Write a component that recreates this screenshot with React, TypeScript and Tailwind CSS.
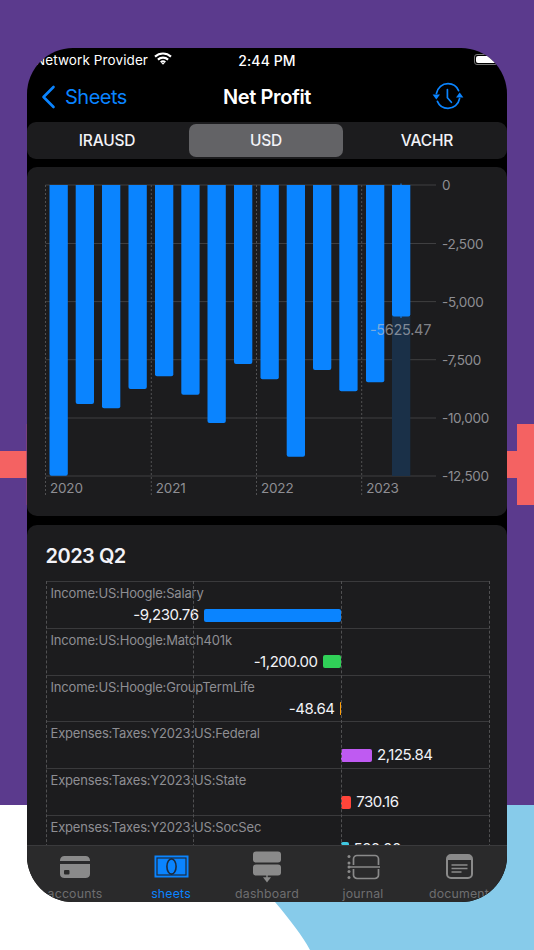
import React from "react";

const tops = [49.5, 75.7, 102, 128.5, 155, 181.3, 207.5, 234, 260.5, 286.7, 313, 339.3, 366, 392];
const bottoms = [475.7, 404, 408.3, 389, 376.3, 394.7, 423, 364, 379.3, 456.7, 370, 391.3, 382.3, 316.5];
const OX = 27;
const OY = 167;

function barPath(x: number, bottom: number) {
  const l = x - OX;
  const b = bottom - OY;
  const t = 185 - OY;
  const w = 18.3;
  return `M${l} ${t}H${l + w}V${b - 2}Q${l + w} ${b} ${l + w - 2} ${b}H${l + 2}Q${l} ${b} ${l} ${b - 2}Z`;
}

function Chart() {
  const hLines = [185, 243.5, 301.6, 359.7, 418, 476];
  const labels = ["0", "-2,500", "-5,000", "-7,500", "-10,000", "-12,500"];
  const vLines = [45.5, 151.3, 256.5, 361.7];
  const years = ["2020", "2021", "2022", "2023"];
  return (
    <svg width="480" height="349" viewBox="0 0 480 349" className="block" style={{ fontFamily: "Inter, sans-serif" }}>
      {hLines.map((y) => (
        <line key={y} x1={45.5 - OX} x2={436 - OX} y1={y - OY} y2={y - OY} stroke="#3f3f41" strokeWidth="1" />
      ))}
      {vLines.map((x) => (
        <line key={x} x1={x - OX} x2={x - OX} y1={185 - OY} y2={495 - OY} stroke="#505052" strokeWidth="1" strokeDasharray="2 2" />
      ))}
      <rect x={392 - OX} y={316 - OY} width="18.3" height="160" fill="#1a3048" />
      {tops.map((x, i) => (
        <path key={x} d={barPath(x, bottoms[i])} fill="#0a84ff" />
      ))}
      <line x1={401 - OX} x2={401 - OX} y1={183.5 - OY} y2={318 - OY} stroke="#0a84ff" strokeWidth="1" />
      {hLines.map((y, i) => (
        <text key={y} x={442 - OX} y={y - OY + 5} fontSize="13.5" letterSpacing="-0.3" fill="#8e8e93">
          {labels[i]}
        </text>
      ))}
      {vLines.map((x, i) => (
        <text key={x} x={x - OX + 4.5} y={493 - OY} fontSize="13.5" letterSpacing="-0.2" fill="#8e8e93">
          {years[i]}
        </text>
      ))}
      <text x={400.5 - OX} y={335 - OY} fontSize="14.5" letterSpacing="-0.3" textAnchor="middle" fill="#c4c6cc" fillOpacity="0.62">
        -5625.47
      </text>
    </svg>
  );
}

function Row({
  label,
  value,
  width,
  color,
  negative,
}: {
  label: string;
  value: string;
  width: number;
  color: string;
  negative?: boolean;
}) {
  const bar = <div className="h-[13px] rounded-[2px] shrink-0" style={{ width, backgroundColor: color }} />;
  const text = <span className="text-[15px] leading-[18px] tracking-[-0.45px] text-[#f2f2f7] whitespace-nowrap">{value}</span>;
  return (
    <div className="h-[46.8px] border-t border-[#3a3a3c] pl-[5px] shrink-0">
      <div className="text-[13px] leading-[16px] tracking-[-0.17px] pt-[3px] text-[#8e8e93] whitespace-nowrap">{label}</div>
      <div className="flex h-[20px] mt-[4px] -ml-[5px] items-center">
        <div className="w-[295px] shrink-0 flex justify-end items-center gap-[5px]">{negative ? <>{text}{bar}</> : null}</div>
        <div className="flex items-center gap-[5px]">{negative ? null : <>{bar}{text}</>}</div>
      </div>
    </div>
  );
}

function Wifi() {
  return (
    <svg width="18" height="13" viewBox="0 0 18 13" fill="none" stroke="white" strokeWidth="2.1" strokeLinecap="butt">
      <path d="M1 4.6C5.6 .4 12.4 .4 17 4.6" />
      <path d="M3.9 7.6C6.8 5 11.2 5 14.1 7.6" />
      <path d="M6.7 10.2C8 9.1 10 9.1 11.3 10.2" />
      <path d="M9 12.8l-1.6-1.7c1-.6 2.2-.6 3.2 0z" fill="white" stroke="none" />
    </svg>
  );
}

function HistoryIcon() {
  return (
    <svg width="32" height="30" viewBox="0 0 32 30" fill="none" stroke="#0a84ff" strokeWidth="1.7" strokeLinecap="round">
      <path d="M4.4 12.5C5.6 6.5 10.2 2.6 16 2.6c5 0 8.8 2.8 10.6 7" />
      <path d="M27.6 17.5C26.4 23.5 21.8 27.4 16 27.4c-5 0-8.8-2.8-10.6-7" />
      <path d="M15.4 8.5v8.2l4 4.6" />
      <path d="M0.6 13.4h7.4L4.3 18.4z" fill="#0a84ff" stroke="none" />
      <path d="M24 16.6h7.4L27.7 11.6z" fill="#0a84ff" stroke="none" />
    </svg>
  );
}

function CardIcon() {
  return (
    <svg width="32" height="24" viewBox="0 0 32 24" fill="#8a8a8a">
      <path d="M1 5.5C1 2.8 2.8 1 5.5 1h21C29.2 1 31 2.8 31 5.5V6H1z" />
      <path d="M1 9h30v10c0 2.4-1.8 4-4.5 4h-21C2.8 23 1 21.4 1 19z" />
      <rect x="5" y="15" width="5.5" height="4.4" rx="1" fill="#2a2a2a" />
    </svg>
  );
}

function SheetsIcon() {
  return (
    <svg width="35" height="23" viewBox="0 0 35 23">
      <rect x="0.5" y="0.5" width="34" height="22" fill="#0a84ff" />
      <rect x="3" y="3" width="29" height="17" fill="none" stroke="#1c2b3f" strokeWidth="1.2" />
      <ellipse cx="17.5" cy="11.5" rx="4.6" ry="7.6" fill="none" stroke="#1c2b3f" strokeWidth="1.6" />
    </svg>
  );
}

function DashboardIcon() {
  return (
    <svg width="30" height="32" viewBox="0 0 30 32" fill="#8a8a8a">
      <rect x="1" y="0.5" width="28" height="11" rx="3" />
      <rect x="1" y="13.5" width="28" height="11" rx="3" />
      <rect x="14.3" y="24" width="1.4" height="3" />
      <path d="M11 26.2h8l-4 5.3z" />
    </svg>
  );
}

function JournalIcon() {
  return (
    <svg width="33" height="26" viewBox="0 0 33 26" fill="none" stroke="#8a8a8a" strokeWidth="1.7">
      <circle cx="2" cy="2.5" r="1.5" fill="#8a8a8a" stroke="none" />
      <circle cx="2" cy="9" r="1.5" fill="#8a8a8a" stroke="none" />
      <circle cx="2" cy="13" r="1.5" fill="#8a8a8a" stroke="none" />
      <circle cx="2" cy="17.5" r="1.5" fill="#8a8a8a" stroke="none" />
      <circle cx="2" cy="23.5" r="1.5" fill="#8a8a8a" stroke="none" />
      <path d="M6.5 11V5a3.5 3.5 0 0 1 3.5-3.5h18A3.5 3.5 0 0 1 31.5 5v6" />
      <path d="M6.5 15v6a3.5 3.5 0 0 0 3.5 3.5h18a3.5 3.5 0 0 0 3.5-3.5v-6" />
      <path d="M2 13h31" />
    </svg>
  );
}

function DocIcon() {
  return (
    <svg width="27" height="25" viewBox="0 0 27 25" fill="none">
      <rect x="1" y="1" width="25" height="23" rx="4" stroke="#8a8a8a" strokeWidth="2" />
      <path d="M1 5a4 4 0 0 1 4-4h17a4 4 0 0 1 4 4v1H1z" fill="#8a8a8a" />
      <path d="M5.5 11h16M5.5 14.5h16M5.5 18h10" stroke="#8a8a8a" strokeWidth="1.4" />
    </svg>
  );
}

const tabs = [
  { label: "accounts", icon: <CardIcon /> },
  { label: "sheets", icon: <SheetsIcon />, active: true },
  { label: "dashboard", icon: <DashboardIcon /> },
  { label: "journal", icon: <JournalIcon /> },
  { label: "document", icon: <DocIcon /> },
];

export default function App() {
  return (
    <div className="relative w-[534px] h-[950px] overflow-hidden bg-white pl-[27px] pt-[48px] font-['Inter',sans-serif]">
      <svg className="absolute inset-0" width="534" height="950" viewBox="0 0 534 950">
        <rect width="534" height="805" fill="#5b3a8d" />
        <path d="M534 805H480V880C480 880 280 895 275 902C290 920 302 935 310 950H534Z" fill="#87cbea" />
        <rect x="0" y="451" width="30" height="27" fill="#f46262" />
        <rect x="26.4" y="424" width="2" height="81" fill="#8a4578" />
        <path d="M500 451H517V424H534V505H517V478H500Z" fill="#f46262" />
      </svg>

      <div className="relative w-[480px] h-[854px] rounded-[46px] overflow-hidden bg-black flex flex-col text-white">
        <div className="h-[24px] shrink-0 relative flex items-center pl-[8px] text-[13.5px] tracking-[0.1px]">
          <span className="whitespace-nowrap">Network Provider</span>
          <span className="ml-[6px] -mt-[3px]">
            <Wifi />
          </span>
          <span className="absolute left-0 right-0 top-0 h-full flex items-center justify-center font-medium text-[14px]">2:44 PM</span>
          <div className="absolute left-[447px] top-[6px] w-[24px] h-[11px] rounded-[3px] border border-[#777] p-[1px]">
            <div className="w-full h-full bg-white rounded-[2px]" />
          </div>
        </div>

        <div className="h-[50px] shrink-0 relative flex items-center">
          <svg width="15" height="24" viewBox="0 0 15 24" className="ml-[14px]" fill="none" stroke="#0a84ff" strokeWidth="2.6" strokeLinecap="round" strokeLinejoin="round">
            <path d="M12.5 2L2.5 12l10 10" />
          </svg>
          <span className="ml-[9px] text-[20px] tracking-[-0.5px] text-[#0a84ff]">Sheets</span>
          <span className="absolute inset-0 flex items-center justify-center text-[20px] tracking-[-0.4px] font-semibold">Net Profit</span>
          <span className="absolute left-[405px] top-[9px]">
            <HistoryIcon />
          </span>
        </div>

        <div className="h-[37px] shrink-0 grid grid-cols-3 bg-[#1c1c1e] rounded-[9px] py-[2px] text-[15.5px] tracking-[-0.2px] font-medium text-[#f2f2f7]">
          <div className="flex items-center justify-center pt-[1px]">IRAUSD</div>
          <div className="flex items-center justify-center pt-[1px] bg-[#636366] rounded-[7px] ml-[2px] mr-[4px]">USD</div>
          <div className="flex items-center justify-center pt-[1px]">VACHR</div>
        </div>

        <div className="mt-[8px] h-[349px] shrink-0 bg-[#1c1c1e] rounded-[10px]">
          <Chart />
        </div>

        <div className="mt-[9px] flex-1 min-h-0 overflow-hidden bg-[#1c1c1e] rounded-t-[10px] px-[18.5px]">
          <div className="h-[56px] flex items-center text-[20px] tracking-[-0.5px] font-semibold text-[#f2f2f7] pt-[5px]">2023 Q2</div>
          <div className="relative flex flex-col">
            <Row label="Income:US:Hoogle:Salary" value="-9,230.76" width={137} color="#0a84ff" negative />
            <Row label="Income:US:Hoogle:Match401k" value="-1,200.00" width={18} color="#30d158" negative />
            <Row label="Income:US:Hoogle:GroupTermLife" value="-48.64" width={1} color="#ff9f0a" negative />
            <Row label="Expenses:Taxes:Y2023:US:Federal" value="2,125.84" width={31.5} color="#bf5af2" />
            <Row label="Expenses:Taxes:Y2023:US:State" value="730.16" width={10.7} color="#ff453a" />
            <Row label="Expenses:Taxes:Y2023:US:SocSec" value="520.00" width={8} color="#40c8e0" />
            <div className="absolute inset-y-0 left-0 border-l border-dashed border-[#505052]" />
            <div className="absolute inset-y-0 left-[147.5px] border-l border-dashed border-[#505052]" />
            <div className="absolute inset-y-0 left-[295px] border-l border-dashed border-[#505052]" />
            <div className="absolute inset-y-0 left-[443px] border-l border-dashed border-[#505052]" />
          </div>
        </div>

        <div className="h-[57px] shrink-0 grid grid-cols-5 bg-[#2a2a2b] border-t border-[#3a3a3c]">
          {tabs.map((t) => (
            <div key={t.label} className="relative flex flex-col items-center">
              <div className="h-[38px] flex items-center justify-center pt-[3px]">{t.icon}</div>
              <span className={`mt-[2px] text-[12.3px] leading-[16px] tracking-[0.2px] whitespace-nowrap ${t.active ? "text-[#0a84ff]" : "text-[#6e6e70]"}`}>{t.label}</span>
            </div>
          ))}
        </div>
      </div>
    </div>
  );
}
